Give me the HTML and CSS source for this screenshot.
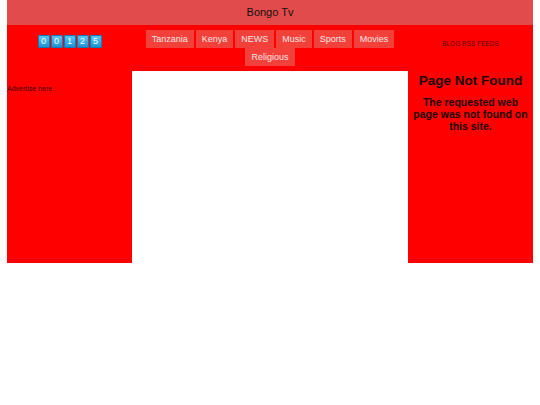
FILE: index.html
```html
<!DOCTYPE html>
<html lang="en">
<head>
  <meta charset="UTF-8">
  <meta name="viewport" content="width=device-width, initial-scale=1.0">
  <title>Bongo Tv</title>
  <link rel="stylesheet" href="styles.css">
</head>
<body>
  <div class="page">
    <div class="header">Bongo Tv</div>

    <div class="layout">
      <!-- top row -->
      <div class="top-left">
        <div class="counter">
          <span class="digit">0</span>
          <span class="digit">0</span>
          <span class="digit">1</span>
          <span class="digit">2</span>
          <span class="digit">5</span>
        </div>
      </div>
      <div class="top-center">
        <ul class="nav">
          <li><a href="#">Tanzania</a></li>
          <li><a href="#">Kenya</a></li>
          <li><a href="#">NEWS</a></li>
          <li><a href="#">Music</a></li>
          <li><a href="#">Sports</a></li>
          <li><a href="#">Movies</a></li>
          <li><a href="#">Religious</a></li>
        </ul>
      </div>
      <div class="top-right">
        <div class="feeds">BLOG RSS FEEDS</div>
      </div>

      <!-- main row -->
      <div class="sidebar-left">
        <p class="advert">Advertise here</p>
      </div>
      <div class="content"></div>
      <div class="sidebar-right">
        <h2>Page Not Found</h2>
        <p class="message">The requested web page was not found on this site.</p>
      </div>
    </div>
  </div>
</body>
</html>
```

FILE: styles.css
```css
body {
  margin: 0;
  font-family: "Liberation Sans", Arial, sans-serif;
  background: #fff;
}
.page {
  margin: 0 7px;
}
.header {
  height: 25px;
  line-height: 25px;
  background-color: #e24b4b;
  text-align: center;
  font-size: 11px;
  color: #111;
}
.layout {
  display: grid;
  grid-template-columns: 125px 276px 125px;
  grid-template-rows: 46px 192px;
  background-color: #ff0000;
}
.top-left {
  display: flex;
  justify-content: center;
  padding-top: 10px;
}
.counter {
  display: flex;
  gap: 1px;
  height: 13px;
}
.digit {
  width: 12px;
  height: 13px;
  line-height: 13px;
  text-align: center;
  font-size: 9px;
  color: #fff;
  border-radius: 2px;
  background: linear-gradient(#5ccaf2, #1a8fd0);
  box-shadow: inset 0 0 0 1px #0f7ab8;
}
.top-center {
  padding-top: 5px;
}
.nav {
  list-style: none;
  margin: 0;
  padding: 0;
  display: flex;
  flex-wrap: wrap;
  justify-content: center;
  column-gap: 2px;
}
.nav a {
  display: block;
  height: 18px;
  line-height: 18px;
  padding: 0 6px;
  font-size: 9px;
  color: #fde6e4;
  text-decoration: none;
  background-color: #f2413b;
}
.top-right {
  display: flex;
  justify-content: center;
  padding-top: 15px;
}
.feeds {
  font-size: 6.5px;
  color: #5a0000;
}
.sidebar-left {
  padding-top: 14px;
}
.advert {
  margin: 0;
  font-size: 7px;
  color: #400000;
}
.content {
  background-color: #fff;
}
.sidebar-right {
  text-align: center;
  padding: 0 4px;
}
.sidebar-right h2 {
  margin: 1px 0 6px;
  font-size: 13.5px;
  line-height: 18px;
  color: #1a0000;
}
.message {
  margin: 0;
  font-size: 10.5px;
  font-weight: bold;
  line-height: 12px;
  color: #1a0000;
}
```
